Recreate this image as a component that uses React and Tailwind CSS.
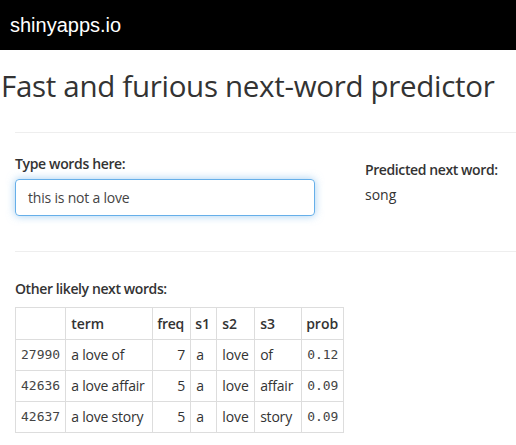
export default function App() {
  const rows = [
    ["27990", "a love of", "7", "a", "love", "of", "0.12"],
    ["42636", "a love affair", "5", "a", "love", "affair", "0.09"],
    ["42637", "a love story", "5", "a", "love", "story", "0.09"],
  ];
  const sans = { fontFamily: '"Open Sans", sans-serif' };
  const mono = { fontFamily: '"DejaVu Sans Mono", monospace' };
  return (
    <div className="w-[516px] h-[445px] overflow-hidden bg-white text-[#333]" style={sans}>
      <div className="h-[50px] bg-black flex items-center pl-[10px]">
        <span className="text-white text-[20px] leading-none" style={{ fontFamily: '"Liberation Sans", Arial, sans-serif' }}>
          shinyapps.io
        </span>
      </div>
      <h1 className="pl-[1px] mt-[18px] text-[29.5px] leading-[36px] font-normal text-[#333] whitespace-nowrap tracking-[-0.3px]">
        Fast and furious next-word predictor
      </h1>
      <div className="pl-[15px]">
        <div className="mt-[28px] border-t border-[#eee]" />
        <div className="flex pt-[21px] h-[118px]">
          <div className="w-[350px]">
            <div className="text-[14px] font-semibold leading-[20px] tracking-[-0.35px]">Type words here:</div>
            <div className="mt-[5px] w-[300px] h-[37px] border border-[#66afe9] rounded-[4px] shadow-[0_0_8px_rgba(102,175,233,0.6)] flex items-center pl-[12px] text-[14px] text-[#444] tracking-[-0.2px]">
              this is not a love
            </div>
          </div>
          <div className="pt-[6px]">
            <div className="text-[14px] font-semibold leading-[20px] tracking-[-0.4px]">Predicted next word:</div>
            <div className="mt-[5px] text-[14px] leading-[20px]">song</div>
          </div>
        </div>
        <div className="border-t border-[#eee]" />
        <div className="mt-[27px] text-[14px] font-semibold leading-[20px] tracking-[-0.4px]">Other likely next words:</div>
        <table className="mt-[8px] border-collapse text-[14px] leading-[20px]">
          <thead>
            <tr className="h-[32px]">
              <th className="w-[50px] border border-[#ddd]"></th>
              <th className="w-[87px] border border-[#ddd] text-left px-[5px] font-semibold">term</th>
              <th className="w-[38px] border border-[#ddd] text-left px-[4px] font-semibold tracking-[-0.3px]">freq</th>
              <th className="w-[26px] border border-[#ddd] text-left px-[4px] font-semibold">s1</th>
              <th className="w-[38px] border border-[#ddd] text-left px-[5px] font-semibold">s2</th>
              <th className="w-[47px] border border-[#ddd] text-left px-[5px] font-semibold">s3</th>
              <th className="w-[41px] border border-[#ddd] text-left px-[4px] font-semibold">prob</th>
            </tr>
          </thead>
          <tbody>
            {rows.map((r) => (
              <tr key={r[0]} className="h-[31px]">
                <td className="border border-[#ddd] text-right px-[5px] text-[13px] text-[#444]" style={mono}>{r[0]}</td>
                <td className="border border-[#ddd] px-[5px] whitespace-nowrap tracking-[-0.2px]">{r[1]}</td>
                <td className="border border-[#ddd] text-right px-[5px]">{r[2]}</td>
                <td className="border border-[#ddd] px-[5px]">{r[3]}</td>
                <td className="border border-[#ddd] px-[5px]">{r[4]}</td>
                <td className="border border-[#ddd] px-[5px] tracking-[-0.2px]">{r[5]}</td>
                <td className="border border-[#ddd] px-[5px] text-[13px] text-[#444]" style={mono}>{r[6]}</td>
              </tr>
            ))}
          </tbody>
        </table>
      </div>
    </div>
  );
}
